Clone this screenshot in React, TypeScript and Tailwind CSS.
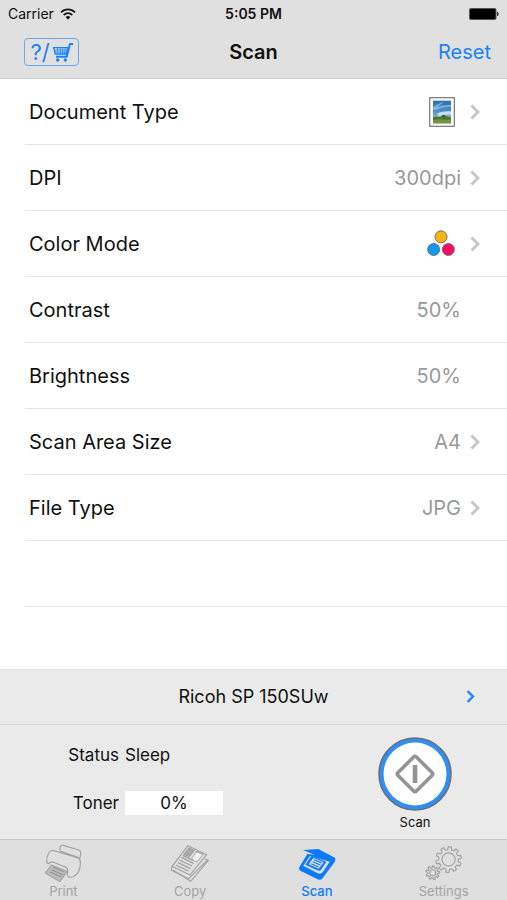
import type { ReactNode } from "react";

type Setting = {
  label: string;
  value: ReactNode;
  chevron: boolean;
};

function gearPath(cx: number, cy: number, outer: number, inner: number, teeth: number) {
  const step = (Math.PI * 2) / teeth;
  const points: string[] = [];
  for (let i = 0; i < teeth; i++) {
    const mid = i * step - Math.PI / 2 + 0.1;
    const corners = [
      [inner, -0.3],
      [outer, -0.19],
      [outer, 0.19],
      [inner, 0.3],
    ];
    corners.forEach(([r, k]) => {
      const a = mid + k * step;
      points.push(`${(cx + r * Math.cos(a)).toFixed(2)} ${(cy + r * Math.sin(a)).toFixed(2)}`);
    });
  }
  return `M${points.join("L")}Z`;
}

function Chevron({ className }: { className: string }) {
  return (
    <svg viewBox="0 0 10 16" className={className} fill="none" stroke="currentColor" strokeWidth="3" aria-hidden="true">
      <path d="M1.5 1.5 8 8l-6.5 6.5" />
    </svg>
  );
}

function WifiIcon() {
  return (
    <svg viewBox="0 0 48 36" className="h-3 w-4" fill="none" stroke="#161616" strokeWidth="5" aria-hidden="true">
      <path d="M3 13C15 1 33 1 45 13" />
      <path d="M11 21c8-7 18-7 26 0" />
      <path d="M17 27c4-4 10-4 14 0l-7 8z" fill="#161616" stroke="none" />
    </svg>
  );
}

function BatteryIcon() {
  return (
    <svg viewBox="0 0 30 12" className="h-3 w-[30px]" aria-hidden="true">
      <rect x="0" y="0" width="27.5" height="12" rx="2" fill="#555" />
      <rect x="1" y="1" width="25.5" height="10" rx="1" fill="#000" />
      <path d="M28 4h.6c1.4.6 1.4 3.4 0 4H28z" fill="#333" />
    </svg>
  );
}

function CartIcon() {
  return (
    <svg viewBox="0 0 60 60" className="h-5 w-5" fill="none" stroke="currentColor" aria-hidden="true">
      <path d="M60 6h-9L41 44H9" strokeWidth="6" />
      <path d="M2 17h43l-5 19H7z" strokeWidth="4" />
      <path d="M4 24h39M6 30h35M13 17l2 20M21 17l2 20M29 17v20M37 17l-2 20" strokeWidth="2.5" />
      <circle cx="14" cy="54" r="5" fill="currentColor" stroke="none" />
      <circle cx="37" cy="54" r="5" fill="currentColor" stroke="none" />
    </svg>
  );
}

function PhotoIcon() {
  return (
    <svg viewBox="0 0 78 90" className="h-[30px] w-[26px]" role="img" aria-label="Photo">
      <defs>
        <linearGradient id="sky" x1="0" y1="0" x2="0" y2="1">
          <stop offset="0" stopColor="#2a70b4" />
          <stop offset="0.5" stopColor="#4f93cb" />
          <stop offset="1" stopColor="#c9dfe9" />
        </linearGradient>
      </defs>
      <rect x="2" y="2" width="74" height="86" fill="#fff" stroke="#858585" strokeWidth="4" />
      <path d="M12 11h54v68H12z" fill="url(#sky)" />
      <path d="M12 30c12-5 20-13 32-15-5 7-14 9-19 15 13-4 25-7 41-6v5c-16 0-29 4-39 8-6 2-11 2-15 1z" fill="#a9cfea" opacity=".6" />
      <path d="M24 50c12-6 26-8 42-7v10c-14-1-26 2-36 5z" fill="#e4f0f5" opacity=".8" />
      <path d="M12 61c8-3 17 0 25-2 3-6 9-8 13-2 5 3 11 2 16 4v18H12z" fill="#4f742f" />
      <path d="M12 69c20-6 35 2 54-2v12H12z" fill="#71963b" />
      <path d="M38 62c0-10 9-12 11-1z" fill="#446038" />
    </svg>
  );
}

function ColorIcon() {
  return (
    <svg viewBox="0 0 84 80" className="h-[27px] w-7" stroke="#75706c" strokeWidth="3" role="img" aria-label="Full color">
      <circle cx="42" cy="20" r="18" fill="#fbb40c" />
      <circle cx="20" cy="58" r="18" fill="#0c99f8" />
      <circle cx="64" cy="58" r="18" fill="#f80868" />
    </svg>
  );
}

function PrintIcon() {
  return (
    <svg viewBox="136 25 114 114" className="h-[38px] w-[38px]" fill="none" stroke="currentColor" strokeWidth="3.5" strokeLinejoin="round" aria-hidden="true">
      <path d="M184 38c0-6 4-10 10-9l46 14c6 2 7 7 6 12l-2 12-57-20c-3-2-4-6-3-9z" />
      <path d="M148 84c-7-2-4-18 0-27 4-10 9-14 18-12l70 21c8 3 10 9 9 18-1 13-3 22-9 29-8 9-18 13-25 11-7-1-5-6-4-12 2-12-1-17-10-19l-34-14c-9-3-9 5-15 5z" />
      <path d="M158 88 140 112l44 26 21-31z" fill="#bdbdbd" />
      <path d="m163 95 34 14M158 102l35 15M154 109l34 15" stroke="#939393" />
    </svg>
  );
}

function CopyIcon() {
  return (
    <svg viewBox="515 25 114 114" className="h-[38px] w-[38px]" fill="none" stroke="currentColor" strokeWidth="3.5" strokeLinejoin="round" aria-hidden="true">
      <path d="m522 104 52 33 53-63-11-5" />
      <path d="m518 93-2 11 52 25 58-57" />
      <path d="m566 30 56 27-50 61-54-26z" fill="#dedede" />
      <path d="m569 37 16 7-15 19-16-7z" fill="#aaa" />
      <path d="m591 47 21 10-20 22-16-8z" fill="#eee" stroke="#bbb" />
      <path d="m550 59 33 16M546 65l37 18M540 73l38 18M535 80l38 19M530 88l37 18M590 46l20 9" strokeWidth="4" />
    </svg>
  );
}

function ScanIcon() {
  return (
    <svg viewBox="145 28 114 105" className="h-[35px] w-[38px]" aria-hidden="true">
      <path d="m173 52 65 6 18 6c2 2 1 8-1 12l-38 51c-3 3-8 3-13 1l-52-26c-5-3-5-9-1-14z" fill="currentColor" />
      <path d="m181 58-20 29 42 22c8 3 12 2 17-4l20-30z" fill="#dfdfdf" />
      <path d="m185 58-18 26 34 16c7 4 11 3 15-3l14-22z" fill="currentColor" />
      <path d="m191 64 31 13-15 19-30-13z" fill="#dfdfdf" />
      <path d="m193 69 23 10M189 75l23 10M184 81l23 10" stroke="currentColor" strokeWidth="3.5" />
      <path d="m160 40 46-3 51 27-17 10z" fill="currentColor" />
    </svg>
  );
}

function SettingsIcon() {
  return (
    <svg viewBox="525 29 114 109" className="h-[36px] w-[38px]" fill="none" stroke="currentColor" strokeWidth="3.5" strokeLinejoin="round" aria-hidden="true">
      <path d={gearPath(596, 73, 39, 30, 10)} />
      <circle cx="596" cy="73" r="20" />
      <path d={gearPath(548, 113, 21, 15, 9)} />
      <circle cx="548" cy="113" r="9" />
    </svg>
  );
}

const settings: Setting[] = [
  { label: "Document Type", value: <PhotoIcon />, chevron: true },
  { label: "DPI", value: "300dpi", chevron: true },
  { label: "Color Mode", value: <ColorIcon />, chevron: true },
  { label: "Contrast", value: "50%", chevron: false },
  { label: "Brightness", value: "50%", chevron: false },
  { label: "Scan Area Size", value: "A4", chevron: true },
  { label: "File Type", value: "JPG", chevron: true },
];

const tabs = [
  { label: "Print", icon: <PrintIcon />, active: false },
  { label: "Copy", icon: <CopyIcon />, active: false },
  { label: "Scan", icon: <ScanIcon />, active: true },
  { label: "Settings", icon: <SettingsIcon />, active: false },
];

function SettingRow({ label, value, chevron }: Setting) {
  return (
    <li className="border-b border-[#e6e6e6]">
      <button type="button" className="flex h-[65px] w-full items-center pl-1 text-left text-xl">
        <span className="flex-1 text-[#111]">{label}</span>
        <span className={`text-[#999] ${typeof value === "string" ? "" : "mr-[6px]"}`}>{value}</span>
        <span className="flex w-[46px] pl-[9px]">
          {chevron && <Chevron className="h-4 w-[10px] text-[#c7c7c7]" />}
        </span>
      </button>
    </li>
  );
}

export default function App() {
  return (
    <div className="flex min-h-screen flex-col bg-white font-['Inter',sans-serif] text-[#111]">
      <header className="h-[79px] border-b border-[#cfcfcf] bg-[#e0e0e0]">
        <div className="grid h-7 grid-cols-[1fr_auto_1fr] items-center px-2 text-sm">
          <div className="flex items-center gap-[6px]">
            <span>Carrier</span>
            <WifiIcon />
          </div>
          <span className="font-semibold">5:05 PM</span>
          <div className="flex justify-end">
            <BatteryIcon />
          </div>
        </div>
        <div className="grid h-12 grid-cols-[1fr_auto_1fr] items-center px-4 text-xl">
          <button
            type="button"
            aria-label="Help and shop"
            className="ml-2 flex h-7 w-[55px] items-center justify-center gap-[3px] rounded border border-[#68a8ef] text-[22px] text-[#1a82fb]"
          >
            <span>?/</span>
            <CartIcon />
          </button>
          <h1 className="text-center font-semibold">Scan</h1>
          <button type="button" className="justify-self-end text-[#1a82fb]">
            Reset
          </button>
        </div>
      </header>

      <main className="flex-1 pl-[25px]">
        <ul>
          {settings.map((setting) => (
            <SettingRow key={setting.label} {...setting} />
          ))}
          <li className="h-[66px] border-b border-[#e6e6e6]" />
        </ul>
      </main>

      <section className="bg-[#eaeaea]">
        <button type="button" className="grid h-14 w-full grid-cols-[1fr_auto_1fr] items-center border-b border-[#d6d6d6] px-8">
          <span className="col-start-2 text-lg">Ricoh SP 150SUw</span>
          <Chevron className="h-[13px] w-[9px] justify-self-end text-[#2389f7]" />
        </button>
        <div className="flex h-[114px] items-start justify-between pr-[55px] pl-[67px]">
          <dl className="grid grid-cols-[52px_98px] items-center gap-x-[6px] gap-y-6 pt-[18px] text-[17px] leading-6">
            <dt className="text-right">Status</dt>
            <dd>Sleep</dd>
            <dt className="text-right">Toner</dt>
            <dd className="bg-white text-center">0%</dd>
          </dl>
          <button type="button" className="flex flex-col items-center gap-[2px] pt-3 text-[13px]">
            <svg viewBox="0 0 74 74" className="h-[74px] w-[74px]" aria-hidden="true">
              <circle cx="37" cy="37" r="36" fill="#2f8ff5" stroke="#6b6f75" strokeWidth="1.6" />
              <circle cx="37" cy="37" r="31.5" fill="#fff" />
              <rect x="24" y="24" width="26" height="26" rx="2" fill="none" stroke="#949494" strokeWidth="3.6" transform="rotate(45 37 37)" />
              <path d="M37 28v18" stroke="#949494" strokeWidth="4.6" />
            </svg>
            <span className="leading-[18px]">Scan</span>
          </button>
        </div>
      </section>

      <nav className="grid h-[61px] grid-cols-4 border-t border-[#c6c6c6] bg-[#dfdfdf] text-[13px]">
        {tabs.map((tab) => (
          <button
            key={tab.label}
            type="button"
            aria-current={tab.active ? "page" : undefined}
            className={`flex flex-col items-center ${tab.active ? "font-medium text-[#0d7bf9]" : "text-[#a3a3a3]"}`}
          >
            <span className="flex h-[42px] items-center pt-1">{tab.icon}</span>
            <span className="leading-[18px]">{tab.label}</span>
          </button>
        ))}
      </nav>
    </div>
  );
}
